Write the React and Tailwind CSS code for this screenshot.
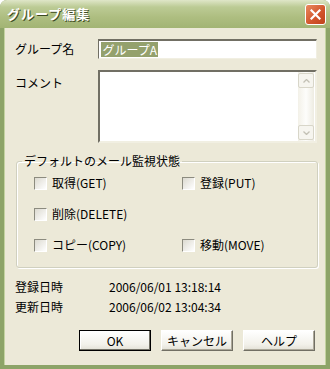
import React from 'react';

const font = { fontFamily: '"Noto Sans CJK JP", "Liberation Sans", sans-serif' };

function CheckBox({ label }) {
  return (
    <label className="flex items-center gap-[5px] h-[14px]">
      <span className="w-[13px] h-[13px] border border-t-[#8c8b7f] border-l-[#8c8b7f] border-r-white border-b-white bg-[linear-gradient(135deg,#dcdad0,#ffffff)]" />
      <span className="leading-none">{label}</span>
    </label>
  );
}

function Button({ children, primary }) {
  return (
    <button
      className={
        'w-[72px] h-[21px] flex items-center justify-center leading-none bg-[linear-gradient(to_bottom,#ffffff,#f2f1ea_70%,#e3e1d6)] ' +
        (primary
          ? 'border border-black shadow-[inset_-1px_-1px_0_#716f64,inset_1px_1px_0_#ffffff]'
          : 'border border-t-white border-l-white border-r-[#716f64] border-b-[#716f64] shadow-[inset_-1px_-1px_0_#aca899]')
      }
    >
      {children}
    </button>
  );
}

export default function App() {
  return (
    <div
      className="w-[330px] h-[369px] flex flex-col bg-[#8da468] rounded-t-[7px] overflow-hidden text-[12px] text-black"
      style={font}
    >
      {/* title bar */}
      <div className="h-[28px] shrink-0 flex items-center justify-between pl-[7px] pr-[4px] bg-[linear-gradient(to_bottom,#dfe6c8,#bccb95_25%,#aebe81_60%,#a2b474)]">
        <span className="text-white font-bold text-[13px] tracking-[1px] [text-shadow:1px_1px_0_#3c4a22]">グループ編集</span>
        <div className="w-[21px] h-[21px] rounded-[3px] border border-white bg-[linear-gradient(135deg,#e98a5f,#d1532a_60%,#c0431d)] flex items-center justify-center">
          <svg width="11" height="11" viewBox="0 0 11 11">
            <path d="M1.5 1.5 L9.5 9.5 M9.5 1.5 L1.5 9.5" stroke="white" strokeWidth="2.2" strokeLinecap="square" />
          </svg>
        </div>
      </div>

      {/* body */}
      <div className="flex-1 mx-[4px] mb-[4px] bg-[#ece9d8] flex flex-col pl-[10px] pr-[8px] border-l border-r border-[#c3d3a0]">
        <div className="mt-[11px] flex items-center">
          <span className="w-[84px]">グループ名</span>
          <div className="w-[220px] h-[20px] border border-t-[#716f64] border-l-[#716f64] border-r-[#f1efe2] border-b-[#f1efe2] bg-white flex items-center pl-[2px] border-t-2">
            <span className="bg-[#94a16d] text-white leading-[15px] px-[1px]">グループA</span>
          </div>
        </div>

        <div className="mt-[11px] flex items-start">
          <span className="w-[84px] mt-[4px]">コメント</span>
          <div className="w-[220px] h-[73px] border-2 border-t-[#716f64] border-l-[#716f64] border-r-[#f1efe2] border-b-[#f1efe2] bg-white flex justify-end">
            <div className="w-[16px] h-full flex flex-col justify-between bg-[linear-gradient(to_right,#f3f1e8,#fdfdfb,#eeece2)] py-[1px] mr-[1px]">
              <div className="h-[15px] border border-[#d8d6c9] rounded-[2px] bg-[#f6f5ef] flex items-center justify-center">
                <svg width="7" height="4" viewBox="0 0 7 4"><path d="M0.5 3.5 L3.5 0.5 L6.5 3.5" fill="none" stroke="#c2c0b4" strokeWidth="1.3" /></svg>
              </div>
              <div className="h-[15px] border border-[#d8d6c9] rounded-[2px] bg-[#f6f5ef] flex items-center justify-center">
                <svg width="7" height="4" viewBox="0 0 7 4"><path d="M0.5 0.5 L3.5 3.5 L6.5 0.5" fill="none" stroke="#c2c0b4" strokeWidth="1.3" /></svg>
              </div>
            </div>
          </div>
        </div>

        <fieldset className="mt-[12px] ml-[1px] w-[302px] h-[113px] border border-[#d0d0bf] rounded-[3px] p-0 shadow-[inset_1px_1px_0_#ffffff,1px_1px_0_#ffffff]">
          <legend className="px-[2px] ml-[5px] leading-none">デフォルトのメール監視状態</legend>
          <div className="grid grid-cols-[148px_1fr] gap-y-[17px] pl-[17px] pt-[9px]">
            <CheckBox label="取得(GET)" />
            <CheckBox label="登録(PUT)" />
            <CheckBox label="削除(DELETE)" />
            <span />
            <CheckBox label="コピー(COPY)" />
            <CheckBox label="移動(MOVE)" />
          </div>
        </fieldset>

        <div className="mt-[12px] flex flex-col gap-[6px]">
          <div className="flex h-[14px] items-center"><span className="w-[94px]">登録日時</span><span>2006/06/01 13:18:14</span></div>
          <div className="flex h-[14px] items-center"><span className="w-[94px]">更新日時</span><span>2006/06/02 13:04:34</span></div>
        </div>

        <div className="mt-[16px] flex justify-end gap-[10px] pr-[2px]">
          <Button primary>OK</Button>
          <Button>キャンセル</Button>
          <Button>ヘルプ</Button>
        </div>
      </div>
    </div>
  );
}
